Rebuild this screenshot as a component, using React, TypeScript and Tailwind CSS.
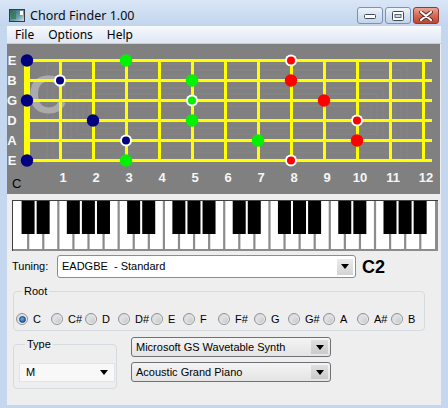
import React from "react";

const NAVY = "#000080";
const GREEN = "#00f200";
const RED = "#ff0000";

type Dot = { s: number; f: number; c: string; ring?: boolean };
const dots: Dot[] = [
  { s: 0, f: 0, c: NAVY }, { s: 0, f: 3, c: GREEN }, { s: 0, f: 8, c: RED, ring: true },
  { s: 1, f: 1, c: NAVY, ring: true }, { s: 1, f: 5, c: GREEN }, { s: 1, f: 8, c: RED },
  { s: 2, f: 0, c: NAVY }, { s: 2, f: 5, c: GREEN, ring: true }, { s: 2, f: 9, c: RED },
  { s: 3, f: 2, c: NAVY }, { s: 3, f: 5, c: GREEN }, { s: 3, f: 10, c: RED, ring: true },
  { s: 4, f: 3, c: NAVY, ring: true }, { s: 4, f: 7, c: GREEN }, { s: 4, f: 10, c: RED },
  { s: 5, f: 0, c: NAVY }, { s: 5, f: 3, c: GREEN }, { s: 5, f: 8, c: RED, ring: true },
];

const strings = ["E", "B", "G", "D", "A", "E"];
const sy = (i: number) => 16 + i * 20;
const fx = (f: number) => 20 + f * 33;

function Fretboard() {
  return (
    <svg width="433" height="150" className="block shrink-0">
      <rect x="0" y="0" width="433" height="150" fill="#808080" />
      {[0, 1, 2, 3, 4, 5, 6, 7].map((k) => (
        <rect key={k} x={40 + k * 6} y={20 + k * 6} width={360 - k * 12} height={100 - k * 12} fill="none" stroke="#858585" strokeWidth="1" />
      ))}
      <text x="21" y="69" fontSize="54" fontWeight="bold" fill="#ababab" fontFamily="Liberation Sans, Arial, sans-serif">C</text>
      {strings.map((_, i) => (
        <rect key={"s" + i} x="20" y={sy(i) - 1} width="405" height="3" fill="#ffff00" />
      ))}
      {Array.from({ length: 12 }, (_, k) => k + 1).map((f) => (
        <rect key={"f" + f} x={fx(f) - 1} y={sy(0) - 1} width="3" height="103" fill="#ffff00" />
      ))}
      <rect x="17" y={sy(0) - 1} width="6" height="103" fill="#ffff00" />
      {strings.map((l, i) => (
        <text key={"l" + i} x="5" y={sy(i) + 5} fontSize="13" fontWeight="bold" fill="#f6f6f6" textAnchor="middle" fontFamily="Liberation Sans, Arial, sans-serif">{l}</text>
      ))}
      {Array.from({ length: 12 }, (_, k) => k + 1).map((f) => (
        <text key={"n" + f} x={fx(f) + 3} y="138" fontSize="13" fontWeight="bold" fill="#f6f6f6" textAnchor="middle" fontFamily="Liberation Sans, Arial, sans-serif">{f}</text>
      ))}
      <text x="5" y="144" fontSize="13" fill="#000" fontFamily="Liberation Sans, Arial, sans-serif">C</text>
      {dots.map((d, i) =>
        d.ring ? (
          <g key={"d" + i}>
            <circle cx={fx(d.f)} cy={sy(d.s) + 0.5} r="6" fill="#ffffff" />
            <circle cx={fx(d.f)} cy={sy(d.s) + 0.5} r="4" fill={d.c} />
          </g>
        ) : (
          <circle key={"d" + i} cx={fx(d.f)} cy={sy(d.s) + 0.5} r="6.2" fill={d.c} />
        )
      )}
    </svg>
  );
}

function Piano() {
  const w = 15.08;
  const whites = Array.from({ length: 28 }, (_, i) => i);
  const blacks: number[] = [];
  for (let i = 0; i < 28; i++) {
    const n = i % 7;
    if (n !== 2 && n !== 6) blacks.push(i + 1);
  }
  return (
    <svg width="426" height="51" className="block">
      <rect x="0" y="0" width="426" height="51" fill="#8c8c8c" />
      <rect x="1" y="1" width="422" height="48" fill="#ffffff" />
      {whites.slice(1).map((i) => (
        <rect key={i} x={1 + i * w - 1} y="1" width="2.2" height="48" fill="#8c8c8c" />
      ))}
      {blacks.map((b) => (
        <rect key={"b" + b} x={1 + b * w - 6.5} y="1" width="13" height="33" fill="#000000" />
      ))}
      <rect x="0" y="0" width="426" height="1" fill="#404040" />
      <rect x="0" y="0" width="1" height="51" fill="#404040" />
    </svg>
  );
}

function AppIcon() {
  return (
    <svg width="16" height="13" viewBox="0 0 16 13">
      <defs>
        <linearGradient id="ig" x1="0" y1="0" x2="1" y2="1">
          <stop offset="0" stopColor="#2a5f60" />
          <stop offset="0.6" stopColor="#6aa0a8" />
          <stop offset="1" stopColor="#d8eef0" />
        </linearGradient>
      </defs>
      <rect x="0.5" y="0.5" width="15" height="12" fill="url(#ig)" stroke="#3a3a3a" />
      <rect x="11" y="2" width="3" height="4" fill="#ffffff" />
      <rect x="2" y="2" width="5" height="8" fill="#2f7c4c" opacity="0.7" />
    </svg>
  );
}

function CaptionButton({ kind }: { kind: "min" | "max" | "close" }) {
  const close = kind === "close";
  return (
    <div
      className={
        close
          ? "w-[26px] h-[17px] rounded-[3px] border border-[#8a3b32] bg-gradient-to-b from-[#e9a595] via-[#d46a55] to-[#c0452f] flex items-center justify-center"
          : "w-[26px] h-[17px] rounded-[3px] border border-[#7d92b0] bg-gradient-to-b from-[#eef3fa] via-[#d6e2f1] to-[#c3d4ea] flex items-center justify-center"
      }
    >
      {kind === "min" && (
        <svg width="12" height="6" viewBox="0 0 12 6">
          <rect x="0.5" y="1.5" width="11" height="4" rx="1" fill="#ffffff" stroke="#3c4a5e" />
        </svg>
      )}
      {kind === "max" && (
        <svg width="12" height="10" viewBox="0 0 12 10">
          <rect x="0.5" y="0.5" width="11" height="9" rx="1" fill="#ffffff" stroke="#3c4a5e" />
          <rect x="3" y="3.5" width="6" height="3" fill="#c9d7ea" stroke="#3c4a5e" strokeWidth="0.8" />
        </svg>
      )}
      {kind === "close" && (
        <svg width="14" height="10" viewBox="0 0 14 10">
          <path d="M2 1 L12 9 M12 1 L2 9" stroke="#5a2a24" strokeWidth="4" strokeLinecap="round" />
          <path d="M2 1 L12 9 M12 1 L2 9" stroke="#ffffff" strokeWidth="2.2" strokeLinecap="round" />
        </svg>
      )}
    </div>
  );
}

function Arrow() {
  return (
    <svg width="8" height="5" viewBox="0 0 8 5">
      <path d="M0 0 H8 L4 5 Z" fill="#000" />
    </svg>
  );
}

const notes: { n: string; w: string }[] = [
  { n: "C", w: "w-[35px]" },
  { n: "C#", w: "w-[34px]" },
  { n: "D", w: "w-[33px]" },
  { n: "D#", w: "w-[33px]" },
  { n: "E", w: "w-[32px]" },
  { n: "F", w: "w-[35px]" },
  { n: "F#", w: "w-[36px]" },
  { n: "G", w: "w-[34px]" },
  { n: "G#", w: "w-[35px]" },
  { n: "A", w: "w-[34px]" },
  { n: "A#", w: "w-[34px]" },
  { n: "B", w: "w-[24px]" },
];

function Radio({ label, checked, w }: { label: string; checked?: boolean; w: string }) {
  return (
    <div className={"flex items-center shrink-0 " + w}>
      <span className="w-[12px] h-[12px] rounded-full border border-[#8f9296] bg-gradient-to-br from-[#d2d4d8] to-[#fbfbfb] flex items-center justify-center shrink-0">
        {checked ? (
          <span className="w-[7px] h-[7px] rounded-full bg-[radial-gradient(circle_at_40%_35%,#5fb0ee,#0d4c9a)] border border-[#1a3f70]" />
        ) : (
          <span className="w-[7px] h-[7px] rounded-full bg-gradient-to-br from-[#e6e7e9] to-[#c6c8cc]" />
        )}
      </span>
      <span className="ml-[5px] text-[11px] leading-[12px] text-black">{label}</span>
    </div>
  );
}

export default function App() {
  return (
    <div className="w-[448px] h-[408px] flex flex-col bg-[#c5d7ee] overflow-hidden font-['Liberation_Sans',Arial,sans-serif] text-black">
      {/* title bar */}
      <div className="h-[26px] shrink-0 flex items-start bg-gradient-to-b from-[#d9e6f6] to-[#c2d5ed]">
        <div className="mt-[9px] ml-[9px]">
          <AppIcon />
        </div>
        <span className="ml-[5px] mt-[7px] text-[12.5px] leading-[17px] font-['Noto_Sans',sans-serif] text-[#0a0a0a]">
          Chord Finder 1.00
        </span>
        <div className="ml-auto mr-[9px] mt-[7px] flex gap-[2px]">
          <CaptionButton kind="min" />
          <CaptionButton kind="max" />
          <CaptionButton kind="close" />
        </div>
      </div>

      {/* client */}
      <div className="flex-1 mx-[7px] mb-[3px] flex flex-col bg-[#eeeeee]">
        {/* menu */}
        <div className="h-[18px] shrink-0 flex items-center gap-[14px] pl-[8px] bg-gradient-to-b from-[#f7f9fd] to-[#dfe7f3] border-b border-[#c5cdd8] text-[12px] font-['Noto_Sans',sans-serif]">
          <span>File</span>
          <span>Options</span>
          <span>Help</span>
        </div>

        <Fretboard />

        <div className="pt-[6px] pl-[5px]">
          <Piano />
        </div>

        {/* tuning */}
        <div className="mt-[4px] flex items-center h-[23px]">
          <span className="ml-[5px] w-[45px] text-[11px]">Tuning:</span>
          <div className="w-[299px] h-[23px] rounded-[3px] border border-[#8b8d90] bg-white flex items-center pl-[4px] pr-[2px]">
            <span className="text-[11px] flex-1">EADGBE&nbsp; - Standard</span>
            <div className="w-[16px] h-[16px] bg-gradient-to-b from-[#ececec] to-[#d3d3d3] flex items-center justify-center">
              <Arrow />
            </div>
          </div>
          <span className="ml-[6px] text-[18px] font-bold leading-[20px]">C2</span>
        </div>

        {/* root group */}
        <fieldset className="mt-[7px] ml-[6px] w-[412px] border border-[#d5dbe0] rounded-[4px] pl-[2px] pt-[15px] pb-[5px]">
          <legend className="ml-[6px] px-[2px] text-[11px] leading-[13px]">Root</legend>
          <div className="flex">
            {notes.map((n, i) => (
              <Radio key={n.n} label={n.n} w={n.w} checked={i === 0} />
            ))}
          </div>
        </fieldset>

        {/* bottom */}
        <div className="mt-[7px] flex">
          <fieldset className="ml-[6px] w-[104px] border border-[#d5dbe0] rounded-[4px] pl-[5px] pr-[1px] pt-[12px] pb-[6px]">
            <legend className="ml-[6px] px-[2px] text-[11px] leading-[13px]">Type</legend>
            <div className="h-[19px] bg-[#f8f8f8] border border-[#e3e3e3] flex items-center pl-[6px] pr-[6px]">
              <span className="text-[11px] flex-1">M</span>
              <Arrow />
            </div>
          </fieldset>
          <div className="ml-[14px] mt-[-1px] w-[200px] flex flex-col gap-[5px]">
            <div className="h-[20px] rounded-[3px] border border-[#6f7175] bg-gradient-to-b from-[#f4f4f4] to-[#e4e4e4] flex items-center pl-[4px] pr-[2px]">
              <span className="text-[11px] flex-1">Microsoft GS Wavetable Synth</span>
              <div className="w-[17px] h-[14px] bg-gradient-to-b from-[#e0e0e0] to-[#cacaca] flex items-center justify-center">
                <Arrow />
              </div>
            </div>
            <div className="h-[20px] rounded-[3px] border border-[#6f7175] bg-gradient-to-b from-[#f4f4f4] to-[#e4e4e4] flex items-center pl-[4px] pr-[2px]">
              <span className="text-[11px] flex-1">Acoustic Grand Piano</span>
              <div className="w-[17px] h-[14px] bg-gradient-to-b from-[#e0e0e0] to-[#cacaca] flex items-center justify-center">
                <Arrow />
              </div>
            </div>
          </div>
        </div>
      </div>
    </div>
  );
}
